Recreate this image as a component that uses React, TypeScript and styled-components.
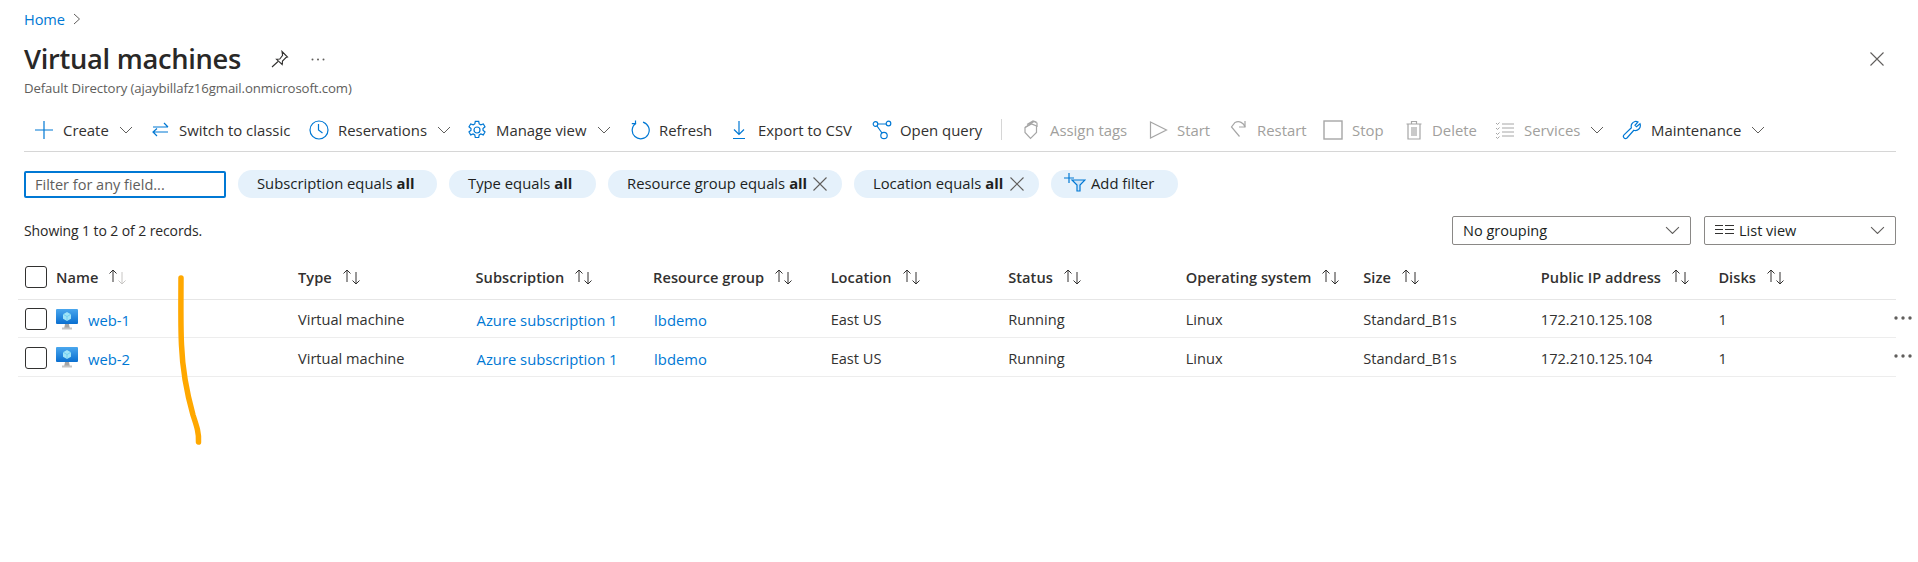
import React from "react";
import styled, { createGlobalStyle } from "styled-components";

const Global = createGlobalStyle`
  html, body { margin: 0; padding: 0; background: #fff; }
  body { font-family: "Open Sans", "Noto Sans", "Liberation Sans", sans-serif; color: #292827; }
  #root { min-height: 562px; }
`;

const Page = styled.div`
  position: relative;
  width: 1918px;
  height: 562px;
  overflow: hidden;
  padding: 0 22px 0 24px;
  box-sizing: border-box;
  font-size: 14.5px;
  letter-spacing: -0.1px;
`;
const Breadcrumb = styled.div`
  display: flex;
  align-items: center;
  gap: 8px;
  height: 38px;
  font-size: 14.6px;
  color: #0078d4;
`;
const TitleRow = styled.div`
  display: flex;
  align-items: center;
  height: 42px;
  padding-right: 12px;
`;
const Title = styled.h1`
  margin: 0;
  font-size: 27.3px;
  font-weight: 600;
  letter-spacing: -0.3px;
  color: #292827;
  line-height: 42px;
  width: 247px;
  white-space: nowrap;
`;
const TitleIcons = styled.div`
  display: flex;
  align-items: center;
  gap: 22px;
  flex: 1;
`;
const Sub = styled.div`
  height: 18px;
  line-height: 18px;
  margin-top: -1px;
  font-size: 13.2px;
  letter-spacing: -0.1px;
  color: #605e5c;
`;
const Toolbar = styled.div`
  display: flex;
  align-items: center;
  height: 43px;
  margin-top: 11px;
  padding-left: 10px;
  font-size: 14.9px;
  letter-spacing: 0;
  border-bottom: 1px solid #d6d6d6;
`;
const Tool = styled.div<{ $off?: boolean; $w: number }>`
  display: flex;
  align-items: center;
  width: ${(p) => p.$w}px;
  flex: none;
  color: ${(p) => (p.$off ? "#a19f9d" : "#323130")};
  white-space: nowrap;
`;
const ToolIcon = styled.span<{ $w: number }>`
  display: flex;
  width: ${(p) => p.$w}px;
  flex: none;
`;
const ToolChevron = styled.span`
  display: flex;
  margin-left: 10px;
`;
const Divider = styled.div`
  width: 1px;
  height: 21px;
  background: #d6d6d6;
  margin: 0 21px 0 0;
`;
const FilterRow = styled.div`
  display: flex;
  align-items: center;
  gap: 12px;
  margin-top: 18px;
  height: 28px;
`;
const FilterInput = styled.input`
  width: 202px;
  height: 27px;
  box-sizing: border-box;
  border: 2px solid #0078d4;
  border-radius: 2px;
  padding: 0 9px;
  font: inherit;
  letter-spacing: 0;
  outline: none;
  &::placeholder { color: #605e5c; opacity: 1; }
`;
const Pill = styled.div<{ $w: number }>`
  display: flex;
  align-items: center;
  width: ${(p) => p.$w}px;
  height: 28px;
  box-sizing: border-box;
  padding: 0 0 2px 19px;
  background: #e5f1fb;
  border-radius: 14px;
  white-space: nowrap;
  color: #201f1e;
  font-size: 14.8px;
  letter-spacing: 0;
  b { font-weight: 700; margin-left: 4px; }
`;
const PillClose = styled.span`
  display: flex;
  margin-left: auto;
  margin-right: 15px;
  margin-top: 2px;
`;
const AddFilter = styled(Pill)`
  padding-left: 13px;
  gap: 5px;
`;
const SummaryRow = styled.div`
  display: flex;
  align-items: center;
  margin-top: 18px;
  height: 28px;
`;
const Summary = styled.div`
  flex: 1;
  font-size: 14px;
  color: #292827;
`;
const Select = styled.div<{ $w: number }>`
  display: flex;
  align-items: center;
  justify-content: space-between;
  width: ${(p) => p.$w}px;
  height: 29px;
  box-sizing: border-box;
  border: 1px solid #8a8886;
  border-radius: 2px;
  padding: 0 10px 0 10px;
  margin-left: 13px;
  color: #201f1e;
  letter-spacing: 0;
`;
const SelectLabel = styled.span`
  display: flex;
  align-items: center;
  gap: 5px;
`;
const Row = styled.div<{ $head?: boolean; $h: number }>`
  display: grid;
  grid-template-columns: 274px repeat(9, 177.55px) 1fr;
  align-items: center;
  height: ${(p) => p.$h}px;
  margin-left: -6px;
  padding-left: 6px;
  padding-top: ${(p) => (p.$head ? 11 : 1)}px;
  border-bottom: 1px solid ${(p) => (p.$head ? "#e6e6e6" : "#ededed")};
  box-sizing: border-box;
`;
const Head = styled.div`
  display: flex;
  align-items: center;
  gap: 10px;
  font-weight: 600;
  font-size: 14.6px;
  letter-spacing: 0.05px;
  color: #323130;
  white-space: nowrap;
`;
const NameCell = styled.div`
  display: flex;
  align-items: center;
  gap: 9px;
`;
const Box = styled.span`
  display: block;
  width: 22px;
  height: 22px;
  box-sizing: border-box;
  border: 1px solid #323130;
  border-radius: 3px;
  flex: none;
  margin-left: 1px;
`;
const LinkText = styled.a`
  color: #0078d4;
  font-size: 14.8px;
  letter-spacing: 0;
  padding-top: 2px;
  white-space: nowrap;
  margin-left: 1px;
`;
const Cell = styled.div`
  color: #323130;
  font-size: 14.6px;
  letter-spacing: 0;
  white-space: nowrap;
`;
const More = styled.div`
  position: absolute;
  right: -16px;
  top: 3px;
`;
const RowWrap = styled.div`
  position: relative;
`;
const Scribble = styled.svg`
  position: absolute;
  left: 170px;
  top: 270px;
`;

const Svg: React.FC<{ s?: number; c?: string; w?: number; children: React.ReactNode }> = ({ s = 20, c = "#0078d4", w = 1.2, children }) => (
  <svg width={s} height={s} viewBox="0 0 20 20" fill="none" stroke={c} strokeWidth={w}>{children}</svg>
);
const Chevron: React.FC<{ w?: number }> = ({ w = 14 }) => (
  <svg width={w} height={(w * 8) / 14} viewBox="0 0 14 8" fill="none" stroke="#605e5c" strokeWidth="1"><path d="M1 1l6 6 6-6" /></svg>
);
const X: React.FC<{ s?: number }> = ({ s = 14 }) => (
  <svg width={s} height={s} viewBox="0 0 14 14" fill="none" stroke="#605e5c" strokeWidth="1.1"><path d="M.5.5l13 13M13.500.5l-13 13" /></svg>
);
const gray = "#a6a6a6";
const icons = {
  plus: <Svg><path d="M10 1v18M1 10h18" /></Svg>,
  swap: <Svg><path d="M2 7h15M13 3l4 4M17 12H2M6 8.500 2 12l4 4" /></Svg>,
  clock: <Svg><circle cx="10" cy="10" r="9" /><path d="M9.500 4v6l4 3" /></Svg>,
  gear: (
    <Svg>
      <circle cx="10" cy="10" r="3" />
      <path d="M8.300 1.300h3.400l.5 2.600 1.600.9 2.500-.9 1.700 2.900-2 1.700v1.800l2 1.700-1.700 2.900-2.500-.9-1.600.9-.5 2.600H8.300l-.5-2.600-1.600-.9-2.500.9-1.700-2.900 2-1.700V8.500l-2-1.700 1.700-2.900 2.500.9 1.600-.9z" />
    </Svg>
  ),
  refresh: <Svg><path d="M6 3.200A8.500 8.500 0 1 0 13 2.100" /><path d="M5.500 0.500V3.700H1.800" /></Svg>,
  exportCsv: <Svg><path d="M7 1v13M2 9.500l5 5 5-5M1 18.500h12" /></Svg>,
  query: <Svg><circle cx="3.500" cy="4" r="2.300" /><circle cx="16.500" cy="3.500" r="2.300" /><circle cx="12" cy="15.500" r="3.200" /><path d="M6 4h8M5 6l5 7" /></Svg>,
  tags: (
    <Svg c={gray}>
      <path d="M2 7.500v5l5.500 6 6-6v-6.500l-5-2z" />
      <path d="M2 7.500 11 1.500l3 1.500v4M4 4.500 10 1l3.500 1" />
    </Svg>
  ),
  start: <Svg c={gray}><path d="M1.500 2l16 8-16 8z" /></Svg>,
  restart: <Svg c={gray}><path d="M15 7A7 7 0 0 0 5 2.500L1.500 7l8 9.500" /><path d="M15 1v6H9" /></Svg>,
  stop: <Svg c={gray} w={1.4}><rect x="1" y="1" width="18" height="18" /></Svg>,
  del: <Svg c={gray}><path d="M2.500 4h15M4 4v15h12V4M7.500 4V1.500h5V4M8 7v9M10 7v9M12 7v9" /></Svg>,
  services: <Svg c={gray} w={1}><path d="M7 4h12M7 8h12M7 12h12M7 16h12M1 3l1.500 1.500L4.500 2.500M1 8l1.500 1.500L4.500 7.500M1 13l1.500 1.500 2-2M1 17l1.500 1.500 2-2" /></Svg>,
  wrench: <Svg><path d="M13 1.500a5 5 0 0 1 3 .5l-3 3.300 1.500 1.500L18 3.800a5 5 0 0 1-6.200 6.500L5 18a2.200 2.200 0 0 1-3-3.200l7.400-7A5 5 0 0 1 13 1.500z" /></Svg>,
};
type ToolDef = { label: string; icon: keyof typeof icons; w: number; iw: number; off?: boolean; menu?: boolean };
const tools: ToolDef[] = [
  { label: "Create", icon: "plus", w: 117, iw: 29, menu: true },
  { label: "Switch to classic", icon: "swap", w: 158, iw: 28 },
  { label: "Reservations", icon: "clock", w: 158, iw: 29, menu: true },
  { label: "Manage view", icon: "gear", w: 163, iw: 29, menu: true },
  { label: "Refresh", icon: "refresh", w: 102, iw: 29 },
  { label: "Export to CSV", icon: "exportCsv", w: 140, iw: 26 },
  { label: "Open query", icon: "query", w: 129, iw: 28 },
];
const tools2: ToolDef[] = [
  { label: "Assign tags", icon: "tags", w: 126, iw: 27, off: true },
  { label: "Start", icon: "start", w: 81, iw: 28, off: true },
  { label: "Restart", icon: "restart", w: 93, iw: 27, off: true },
  { label: "Stop", icon: "stop", w: 81, iw: 29, off: true },
  { label: "Delete", icon: "del", w: 91, iw: 28, off: true },
  { label: "Services", icon: "services", w: 127, iw: 29, off: true, menu: true },
  { label: "Maintenance", icon: "wrench", w: 150, iw: 29, menu: true },
];
const ToolItem: React.FC<{ t: ToolDef }> = ({ t }) => (
  <Tool $w={t.w} $off={t.off}>
    <ToolIcon $w={t.iw}>{icons[t.icon]}</ToolIcon>
    {t.label}
    {t.menu ? <ToolChevron><Chevron /></ToolChevron> : null}
  </Tool>
);
const SortIcon: React.FC<{ dim?: boolean }> = ({ dim }) => (
  <svg width="19" height="16" viewBox="0 0 19 16" fill="none" strokeWidth="1">
    <path d="M5 13V1M1.500 4.500 5 1l3.500 3.500" stroke="#323130" />
    <path d="M14 3v12M10.500 11.500 14 15l3.500-3.500" stroke={dim ? "#c8c6c4" : "#323130"} />
  </svg>
);
const VmIcon = () => (
  <svg width="22" height="21" viewBox="0 0 22 21">
    <defs>
      <linearGradient id="scr" x1="0" y1="0" x2="0" y2="1">
        <stop offset="0" stopColor="#4aa7ee" />
        <stop offset="1" stopColor="#0a6fd0" />
      </linearGradient>
    </defs>
    <rect x="0" y="0" width="22" height="15" rx="1" fill="url(#scr)" />
    <path d="M11 3l4 2.200v4.600L11 12l-4-2.200V5.200z" fill="#9fe3f7" />
    <path d="M11 7.500 15 5.200M11 7.500 7 5.200M11 7.500V12" stroke="#5cc4ee" strokeWidth=".7" />
    <path d="M9 15h4l.8 4H8.200z" fill="#a5a5a5" />
    <rect x="6" y="18.500" width="10" height="2" fill="#c4c4c4" />
  </svg>
);
const heads = ["Type", "Subscription", "Resource group", "Location", "Status", "Operating system", "Size", "Public IP address", "Disks"];
const rows = [
  ["web-1", "172.210.125.108", 38],
  ["web-2", "172.210.125.104", 39],
] as const;

export default function App() {
  return (
    <Page>
      <Global />
      <Breadcrumb>
        Home
        <svg width="8" height="12" viewBox="0 0 8 12" fill="none" stroke="#605e5c"><path d="M1 1l5.500 5L1 11" /></svg>
      </Breadcrumb>
      <TitleRow>
        <Title>Virtual machines</Title>
        <TitleIcons>
          <svg width="18" height="18" viewBox="0 0 18 18" fill="none" stroke="#323130" strokeWidth="1.1">
            <path d="M11 1.500 16.500 7l-1.500.5-3.500 3.500-.3 3.500L5.500 9.300l3.300-.3 2.800-3.700zM7 11.500 1 17" />
          </svg>
          <svg width="14" height="3" viewBox="0 0 14 3" fill="#605e5c"><circle cx="1.500" cy="1.500" r="1" /><circle cx="7" cy="1.500" r="1" /><circle cx="12.500" cy="1.500" r="1" /></svg>
        </TitleIcons>
        <X />
      </TitleRow>
      <Sub>Default Directory (ajaybillafz16gmail.onmicrosoft.com)</Sub>
      <Toolbar>
        {tools.map((t) => <ToolItem key={t.label} t={t} />)}
        <Divider />
        {tools2.map((t) => <ToolItem key={t.label} t={t} />)}
      </Toolbar>
      <FilterRow>
        <FilterInput placeholder="Filter for any field..." />
        <Pill $w={199}>Subscription equals <b>all</b></Pill>
        <Pill $w={147}>Type equals <b>all</b></Pill>
        <Pill $w={234}>Resource group equals <b>all</b><PillClose><X s={14} /></PillClose></Pill>
        <Pill $w={185}>Location equals <b>all</b><PillClose><X s={14} /></PillClose></Pill>
        <AddFilter $w={127}>
          <svg width="22" height="20" viewBox="0 0 22 20" fill="none" stroke="#0078d4" strokeWidth="1.2">
            <path d="M5 0v10M0 5h10" />
            <path d="M8 7h13l-5 5v6h-3v-6z" fill="#cfe4f7" />
          </svg>
          Add filter
        </AddFilter>
      </FilterRow>
      <SummaryRow>
        <Summary>Showing 1 to 2 of 2 records.</Summary>
        <Select $w={239}>
          <SelectLabel>No grouping</SelectLabel>
          <Chevron w={15} />
        </Select>
        <Select $w={192}>
          <SelectLabel>
            <svg width="19" height="12" viewBox="0 0 19 12" fill="none" stroke="#323130"><path d="M0 1.500h8M0 5.500h8M0 9.500h8M10 1.500h9M10 5.500h9M10 9.500h9" /></svg>
            List view
          </SelectLabel>
          <Chevron w={15} />
        </Select>
      </SummaryRow>
      <Row $head $h={56}>
        <NameCell>
          <Box />
          <Head>Name <SortIcon dim /></Head>
        </NameCell>
        {heads.map((h) => <Head key={h}>{h} <SortIcon /></Head>)}
      </Row>
      {rows.map((r) => (
        <RowWrap key={r[0]}>
          <Row $h={r[2]}>
            <NameCell>
              <Box />
              <VmIcon />
              <LinkText>{r[0]}</LinkText>
            </NameCell>
            <Cell>Virtual machine</Cell>
            <LinkText>Azure subscription 1</LinkText>
            <LinkText>lbdemo</LinkText>
            <Cell>East US</Cell>
            <Cell>Running</Cell>
            <Cell>Linux</Cell>
            <Cell>Standard_B1s</Cell>
            <Cell>{r[1]}</Cell>
            <Cell>1</Cell>
          </Row>
          <More>
            <svg width="18" height="30" viewBox="0 0 18 30" fill="#605e5c"><circle cx="2" cy="15" r="1.700" /><circle cx="9" cy="15" r="1.700" /><circle cx="16" cy="15" r="1.700" /></svg>
          </More>
        </RowWrap>
      ))}
      <Scribble width="40" height="180" viewBox="0 0 40 180" fill="none">
        <path d="M11 8C11 30 10.500 55 11.500 75C12.500 100 16 120 23 145C27 157 29 163 28.500 172" stroke="#ffa800" strokeWidth="5.500" strokeLinecap="round" />
      </Scribble>
    </Page>
  );
}
